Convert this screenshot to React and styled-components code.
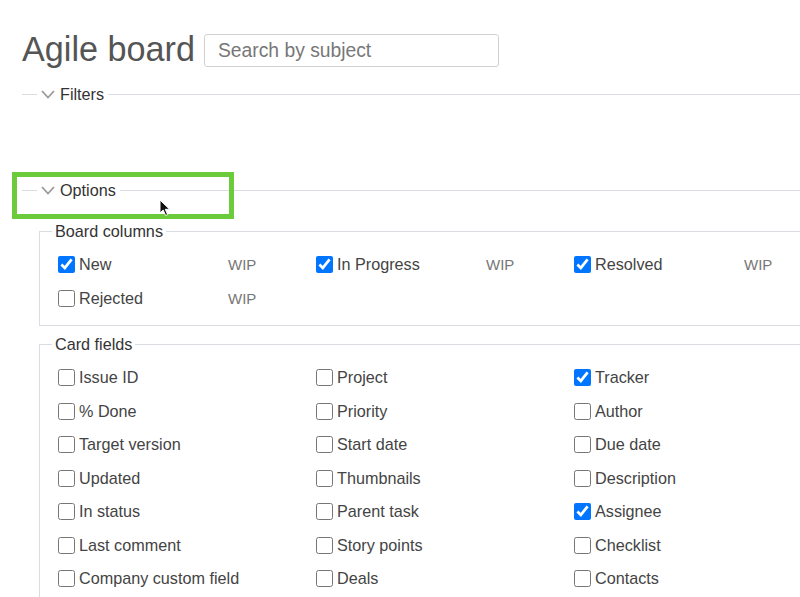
import React from "react";
import styled, { createGlobalStyle } from "styled-components";

const GlobalStyle = createGlobalStyle`
  html, body {
    margin: 0;
    padding: 0;
    overflow: hidden;
    background: #fff;
  }
  body {
    font-family: "Liberation Sans", Arial, sans-serif;
    color: #444;
  }
`;

const Page = styled.div`
  position: relative;
  width: 860px;
  padding: 29px 0 0 22px;
  box-sizing: border-box;
`;

const Header = styled.div`
  display: flex;
  align-items: flex-start;
  gap: 9px;
  height: 40px;
  margin-bottom: 16px;
`;

const Title = styled.h2`
  margin: 0;
  font-size: 34.2px;
  line-height: 40px;
  font-weight: normal;
  color: #555;
`;

const Search = styled.input`
  margin-top: 5px;
  width: 295px;
  height: 33px;
  box-sizing: border-box;
  border: 1px solid #d2d2d2;
  border-radius: 3px;
  padding: 1px 13px 0;
  font-family: "Liberation Sans", Arial, sans-serif;
  font-size: 19.3px;
  color: #444;
  outline: none;
  &::placeholder {
    color: #777;
  }
`;

const Collapsible = styled.fieldset`
  margin: 0;
  border: 0;
  border-top: 1px solid #d9dde2;
  padding: 0 0 ${(p) => p.$bottom || 0}px 17px;
  min-width: 0;
`;

const Legend = styled.legend`
  display: flex;
  align-items: center;
  gap: 5px;
  margin-left: -2px;
  padding: 0 4px;
  font-size: 16.2px;
  line-height: 18px;
  color: #333;
`;

const Chevron = () => (
  <svg width="14" height="9" viewBox="0 0 14 9">
    <polyline
      points="1,1 7,7.5 13,1"
      fill="none"
      stroke="#999"
      strokeWidth="1.8"
    />
  </svg>
);

const Box = styled.fieldset`
  margin: 0 0 ${(p) => p.$gap || 0}px 0;
  border: 1px solid #d9dde2;
  border-right: 0;
  padding: 8px 0 ${(p) => p.$bottom || 0}px 18px;
  min-width: 0;
`;

const BoxLegend = styled.legend`
  margin-left: -6px;
  padding: 0 3px;
  font-size: 16.2px;
  line-height: 18px;
  color: #333;
`;

const Grid = styled.div`
  display: grid;
  grid-template-columns: repeat(3, 258px);
  grid-auto-rows: 33.5px;
`;

const Item = styled.label`
  display: grid;
  grid-template-columns: ${(p) => (p.$wip ? "170px auto" : "auto")};
  align-items: center;
  justify-content: start;
  font-size: 16.2px;
  color: #444;
`;

const Check = styled.span`
  display: flex;
  align-items: center;
  gap: 4px;
`;

const Box17 = styled.input`
  width: 17px;
  height: 17px;
  margin: 0;
`;

const Wip = styled.span`
  font-size: 15px;
  color: #777;
`;

const Highlight = styled.div`
  position: absolute;
  left: 12px;
  top: 172px;
  width: 222px;
  height: 47px;
  box-sizing: border-box;
  border: 5px solid #6bcb3a;
  pointer-events: none;
`;

const Cursor = styled.svg`
  position: absolute;
  left: 159px;
  top: 199px;
`;

const columns = [
  ["New", true],
  ["In Progress", true],
  ["Resolved", true],
  ["Rejected", false],
];

const fields = [
  ["Issue ID", false],
  ["Project", false],
  ["Tracker", true],
  ["% Done", false],
  ["Priority", false],
  ["Author", false],
  ["Target version", false],
  ["Start date", false],
  ["Due date", false],
  ["Updated", false],
  ["Thumbnails", false],
  ["Description", false],
  ["In status", false],
  ["Parent task", false],
  ["Assignee", true],
  ["Last comment", false],
  ["Story points", false],
  ["Checklist", false],
  ["Company custom field", false],
  ["Deals", false],
  ["Contacts", false],
];

export default function App() {
  return (
    <>
      <GlobalStyle />
      <Page>
        <Header>
          <Title>Agile board</Title>
          <Search placeholder="Search by subject" />
        </Header>

        <Collapsible $bottom={78}>
          <Legend>
            <Chevron />
            Filters
          </Legend>
        </Collapsible>

        <Collapsible>
          <Legend>
            <Chevron />
            Options
          </Legend>
          <div style={{ height: 23 }} />
          <Box $bottom={10} $gap={9}>
            <BoxLegend>Board columns</BoxLegend>
            <Grid>
              {columns.map(([name, on]) => (
                <Item key={name} $wip>
                  <Check>
                    <Box17 type="checkbox" defaultChecked={on} />
                    {name}
                  </Check>
                  <Wip>WIP</Wip>
                </Item>
              ))}
            </Grid>
          </Box>
          <Box $bottom={10}>
            <BoxLegend>Card fields</BoxLegend>
            <Grid>
              {fields.map(([name, on]) => (
                <Item key={name}>
                  <Check>
                    <Box17 type="checkbox" defaultChecked={on} />
                    {name}
                  </Check>
                </Item>
              ))}
            </Grid>
          </Box>
        </Collapsible>

        <Highlight />
        <Cursor width="12" height="18" viewBox="0 0 12 18">
          <path
            d="M1 1 L1 14 L4.2 11 L6.6 16.5 L8.6 15.6 L6.3 10.3 L10.6 10.3 Z"
            fill="#111"
            stroke="#fff"
            strokeWidth="1"
          />
        </Cursor>
      </Page>
    </>
  );
}
